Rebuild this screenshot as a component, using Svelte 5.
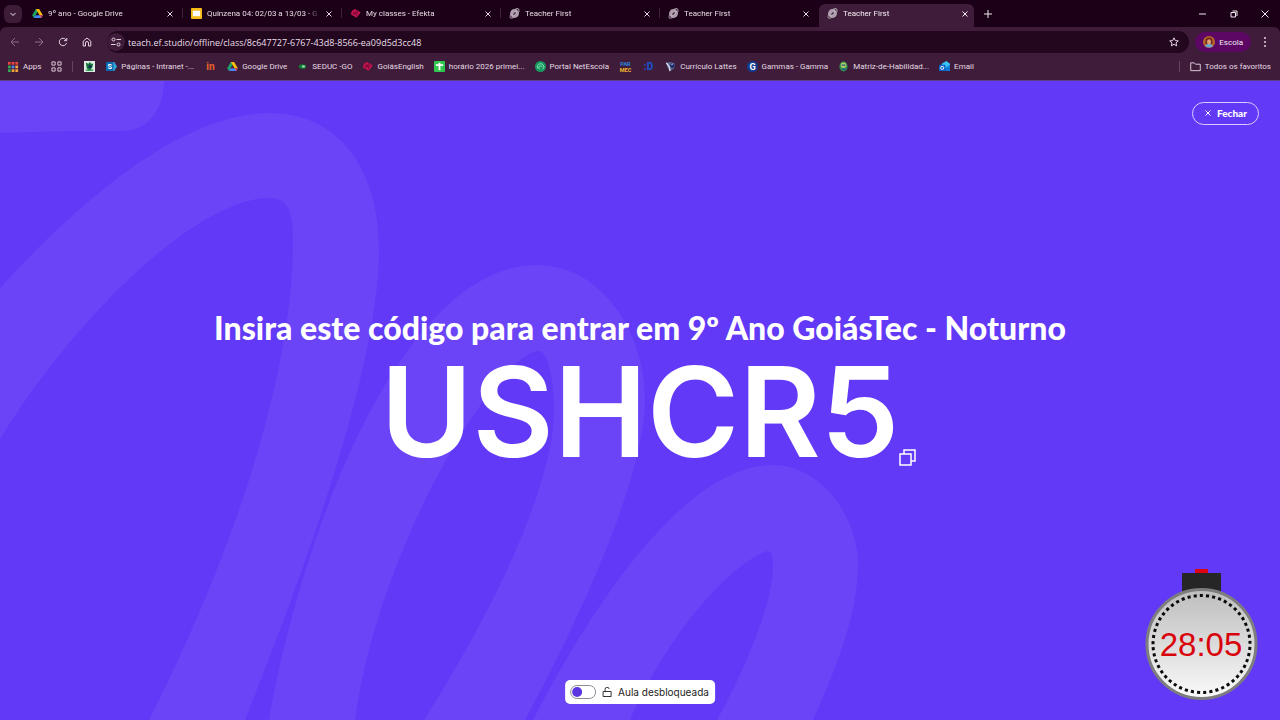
<script lang="ts">
    interface Tab      { title: string; icon: string }
    interface Bookmark { label?: string; icon: string; name?: string }

    const tabs: Tab[] = [
        { title: '9º ano - Google Drive', icon: 'drive' },
        { title: 'Quinzena 04: 02/03 a 13/03 - G', icon: 'slides' },
        { title: 'My classes - Efekta', icon: 'efekta' },
        { title: 'Teacher First', icon: 'planet' },
        { title: 'Teacher First', icon: 'planet' },
        { title: 'Teacher First', icon: 'planet' },
    ];

    const bookmarks: Bookmark[] = [
        { icon: 'crest', name: 'Escola' },
        { icon: 'sharepoint', label: 'Páginas - Intranet -...' },
        { icon: 'in', name: 'in' },
        { icon: 'drive', label: 'Google Drive' },
        { icon: 'seduc', label: 'SEDUC -GO' },
        { icon: 'efekta', label: 'GoiásEnglish' },
        { icon: 'sheet', label: 'horário 2026 primei...' },
        { icon: 'escola', label: 'Portal NetEscola' },
        { icon: 'mec', name: 'PAR MEC' },
        { icon: 'smile', name: ':D' },
        { icon: 'lattes', label: 'Currículo Lattes' },
        { icon: 'gamma', label: 'Gammas - Gamma' },
        { icon: 'matriz', label: 'Matriz-de-Habilidad...' },
        { icon: 'mail', label: 'Email' },
    ];

    let active = $state(5);
    let unlocked = $state(false);
    let url = $state('teach.ef.studio/offline/class/8c647727-6767-43d8-8566-ea09d5d3cc48');

    const code = 'USHCR5';
    const apps = ['#e8453c', '#e8453c', '#e8453c', '#35a853', '#4a86f0', '#f2a33a', '#35a853', '#f2a33a', '#f2a33a'];

    function copyCode() {
        navigator.clipboard?.writeText(code);
    }
</script>

{#snippet favicon(kind: string)}
    <svg class="favicon" viewBox="0 0 12 12" aria-hidden="true">
        {#if kind === 'drive'}
            <path d="M4.200 1h3.600L6 4.300 2 11 .2 7.800z" fill="#1ea362" />
            <path d="M4.200 1h3.600l4 6.800H8.200z" fill="#fbbc05" />
            <path d="M2 11l1.900-3.200h7.900L10 11z" fill="#4285f4" />
            <path d="M8.200 7.800h3.600L10 11z" fill="#ea4335" />
        {:else if kind === 'slides'}
            <rect width="12" height="12" rx="1" fill="#f5ba14" />
            <rect x="2" y="3" width="8" height="6" fill="#fff" />
        {:else if kind === 'efekta'}
            <path d="M5.500 1L9 3l2.500 2-2 3L7 10.500 4.500 9 1 7l1-4z" fill="#c9124f" />
            <path d="M3 3.500l5 4M7 2.500L4 8M3 6l6-1M8 3L7 9" stroke="#6d0935" stroke-width=".8" />
        {:else if kind === 'planet'}
            <circle cx="6" cy="6" r="4.800" fill="#b9a9b7" />
            <ellipse cx="6" cy="6" rx="6.500" ry="2.800" transform="rotate(-48 6 6)" fill="none" stroke="#a897a5" stroke-width="1.200" />
            <ellipse cx="6" cy="6" rx="2" ry="1" transform="rotate(-48 6 6)" fill="#4b3549" />
        {:else if kind === 'crest'}
            <rect width="12" height="12" fill="#dfeee2" />
            <path d="M2 2l3 1 1-2 2 2 2 0-1 4-3 4-3-3z" fill="#16733a" />
            <circle cx="6.500" cy="6" r="1.500" fill="#17205c" />
            <path d="M2 10h8" stroke="#1e9650" stroke-width="1.500" />
        {:else if kind === 'sharepoint'}
            <path d="M7 1h2l3 5-3 5H7z" fill="#30a5d8" />
            <rect y="1" width="8" height="10" rx="1" fill="#0868b2" />
            <text x="4" y="9" text-anchor="middle" font-size="8" font-weight="700" fill="#fff">S</text>
        {:else if kind === 'in'}
            <text x="6" y="10" text-anchor="middle" font-size="11" font-weight="700" fill="#e8632b">in</text>
        {:else if kind === 'seduc'}
            <ellipse cx="6" cy="6" rx="4" ry="2.500" fill="#137a35" />
            <ellipse cx="7" cy="6" rx="1.800" ry="1.200" fill="#a8ecc0" />
        {:else if kind === 'sheet'}
            <rect width="12" height="12" rx="1" fill="#2dc84d" />
            <path d="M2 4.500h8M6 2v8" stroke="#fff" stroke-width="2" />
        {:else if kind === 'escola'}
            <circle cx="6" cy="6" r="6" fill="#17985e" />
            <path d="M3 8a3.500 3.500 0 1 1 5.500 1M5 9a2 2 0 1 1 3-2.500" fill="none" stroke="#8de4bb" />
        {:else if kind === 'mec'}
            <text x="6" y="5.500" text-anchor="middle" font-size="6" font-weight="700" fill="#2b84d9">PAR</text>
            <text x="6" y="11.500" text-anchor="middle" font-size="6" font-weight="700" fill="#f5b731">MEC</text>
        {:else if kind === 'smile'}
            <text x="6" y="10" text-anchor="middle" font-size="11" font-weight="700" fill="#1755d8">:D</text>
        {:else if kind === 'lattes'}
            <path d="M1 2l5-1 5 2-1 5-4 3-3-3z" fill="#5a6690" />
            <path d="M1.500 2l3 4 1 5" fill="none" stroke="#dfe3ee" stroke-width="1.400" />
            <circle cx="8" cy="5" r="2.500" fill="#1e2c6c" />
            <path d="M7 4l2-1" stroke="#dfe3ee" />
        {:else if kind === 'gamma'}
            <circle cx="6" cy="6" r="6" fill="#123b8e" />
            <text x="6" y="9.500" text-anchor="middle" font-size="10" font-weight="700" fill="#fff">G</text>
        {:else if kind === 'matriz'}
            <ellipse cx="6" cy="6" rx="4.500" ry="5.500" fill="#2c8e52" />
            <circle cx="6" cy="4.500" r="3" fill="#b6cf5c" />
            <path d="M4 4.500h4M5 9h3" stroke="#23549b" stroke-width="1.500" />
        {:else if kind === 'mail'}
            <path d="M3 3l5-3 4 3v8H3z" fill="#37c4f4" />
            <path d="M12 4L5 9v2h7z" fill="#1178d4" />
            <rect y="4" width="7" height="7" rx="1" fill="#0b62c4" />
            <circle cx="3.500" cy="7.500" r="1.700" fill="none" stroke="#fff" />
        {/if}
    </svg>
{/snippet}

{#snippet cross()}
    <svg class="cross" viewBox="0 0 6 6" aria-hidden="true"><path d="M.5.5l5 5M5.500.5l-5 5" /></svg>
{/snippet}

<div class="page">
    <header class="browser">
        <div class="strip">
            <button class="search" aria-label="Pesquisar guias">
                <svg viewBox="0 0 8 8"><path d="M1.500 3L4 5.500 6.500 3" /></svg>
            </button>
            <div class="tabs">
                {#each tabs as tab, i}
                    <div class="tab" class:active={i === active}>
                        <button class="title" onclick={() => (active = i)}>
                            {@render favicon(tab.icon)}
                            <span>{tab.title}</span>
                        </button>
                        <button class="close" aria-label="Fechar guia">{@render cross()}</button>
                    </div>
                {/each}
            </div>
            <button class="plus" aria-label="Nova guia">
                <svg viewBox="0 0 8 8"><path d="M4 0v8M0 4h8" /></svg>
            </button>
            <div class="window">
                <button aria-label="Minimizar"><svg viewBox="0 0 8 8"><path d="M0 4h7" /></svg></button>
                <button aria-label="Restaurar">
                    <svg viewBox="0 0 8 8"><path d="M1 2.500h4.500V7H1zM2.500 1H7v5" /></svg>
                </button>
                <button aria-label="Fechar janela"><svg viewBox="0 0 8 8"><path d="M.5.5l7 7M7.500.5l-7 7" /></svg></button>
            </div>
        </div>

        <div class="toolbar">
            <nav class="history">
                <button disabled aria-label="Voltar"><svg viewBox="0 0 10 10"><path d="M9 5H1M5 1L1 5l4 4" /></svg></button>
                <button disabled aria-label="Avançar"><svg viewBox="0 0 10 10"><path d="M1 5h8M5 1l4 4-4 4" /></svg></button>
                <button aria-label="Recarregar">
                    <svg viewBox="0 0 10 10"><path d="M8.500 6.200A3.700 3.700 0 1 1 8 2.800M8.800 1v2.700H6" /></svg>
                </button>
                <button aria-label="Página inicial">
                    <svg viewBox="0 0 10 10"><path d="M1.200 4.200L5 1l3.800 3.200V9H6.500V6a1.500 1.500 0 0 0-3 0v3H1.200z" /></svg>
                </button>
            </nav>
            <div class="omnibox">
                <button class="site" aria-label="Informações do site">
                    <svg viewBox="0 0 10 10"><circle cx="2.500" cy="2.500" r="1.500" /><path d="M5.500 2.500H10M0 7.500h4.500" /><circle cx="7.500" cy="7.500" r="1.500" /></svg>
                </button>
                <input type="text" aria-label="Endereço" bind:value={url} />
                <button class="star" aria-label="Favoritar">
                    <svg viewBox="0 0 10 10"><path d="M5 .8l1.300 2.800 3 .3-2.300 2 .7 3L5 7.300 2.300 8.900l.7-3-2.300-2 3-.3z" /></svg>
                </button>
            </div>
            <button class="profile">
                <svg viewBox="0 0 12 12" aria-hidden="true">
                    <circle cx="6" cy="6" r="6" fill="#b8682c" />
                    <path d="M2 10q4-5 8 0a6 6 0 0 1-8 0z" fill="#65a7d8" />
                    <path d="M2.500 5a3.500 3.500 0 0 1 7 0v3h-7z" fill="#722b1c" />
                    <ellipse cx="6" cy="5.800" rx="2" ry="2.600" fill="#e5a174" />
                </svg>
                Escola
            </button>
            <button class="menu" aria-label="Menu">
                <svg viewBox="0 0 10 10"><circle cx="5" cy="1" r="1" /><circle cx="5" cy="5" r="1" /><circle cx="5" cy="9" r="1" /></svg>
            </button>
        </div>

        <nav class="bookmarks">
            <a href="#apps">
                <svg class="favicon" viewBox="0 0 12 12" aria-hidden="true">
                    {#each apps as fill, i}
                        <rect x={(i % 3) * 4} y={1 + Math.floor(i / 3) * 4} width="3" height="3" {fill} />
                    {/each}
                </svg>
                Apps
            </a>
            <a href="#grupos" aria-label="Grupos de guias">
                <svg class="favicon line" viewBox="0 0 12 12"><path d="M1 1h3.500v3.500H1zM7.500 1H11v3.500H7.500zM1 7.500h3.500V11H1zM7.500 7.500H11V11H7.500z" /></svg>
            </a>
            <span class="rule"></span>
            {#each bookmarks as item}
                <a href="#{item.icon}" class:bare={!item.label} aria-label={item.name}>
                    {@render favicon(item.icon)}{item.label ?? ''}
                </a>
            {/each}
            <span class="rule last"></span>
            <a href="#favoritos">
                <svg class="favicon line" viewBox="0 0 12 12" aria-hidden="true"><path d="M.8 2h3.700L6 3.500h5.200V10.500H.8z" /></svg>
                Todos os favoritos
            </a>
        </nav>
    </header>

    <main>
        <svg class="scribble" viewBox="0 81 1280 639" preserveAspectRatio="xMinYMin slice" aria-hidden="true">
            <path d="M0 81H164C164 110 147 131 123 131L70 131 0 133z" />
            <path d="M0 288C57 226 170 113 269 113C340 113 379 170 379 250C379 350 325 520 245 720H149C230 560 293 380 293 240C293 215 290 198 269 198C200 198 80 310 0 439z" />
            <path d="M269 720C300 540 400 265 537 265C600 265 645 330 645 400C645 470 590 600 525 720H424C500 600 554 480 554 410C554 375 547 351 539 351C500 351 380 540 355 720z" />
            <path d="M533 720C600 590 690 465 773 465C820 465 858 515 858 565C858 610 840 660 813 720H717C750 660 773 600 773 565C773 550 768 550 765 552C720 570 660 650 630 720z" />
        </svg>

        <button class="leave">{@render cross()} Fechar</button>

        <section class="invite">
            <h1>Insira este código para entrar em 9º Ano GoiásTec - Noturno</h1>
            <p class="code">
                {code}
                <button class="copy" aria-label="Copiar código" onclick={copyCode}>
                    <svg viewBox="0 0 17 17"><path d="M1 5h11v11H1zM5 5V1h11v11h-4" /></svg>
                </button>
            </p>
        </section>

        <label class="lock">
            <input type="checkbox" bind:checked={unlocked} />
            <svg viewBox="0 0 10 10" aria-hidden="true"><path d="M1 4.500h8v5H1zM3 4.500V2.500a2 2 0 0 1 4-.5" /></svg>
            <span>Aula desbloqueada</span>
        </label>

        <!-- Countdown stopwatch -->
        <svg class="timer" viewBox="0 0 114 132" role="img" aria-label="28:05">
            <defs>
                <linearGradient id="face" x1="0" y1="0" x2="0" y2="1">
                    <stop offset="0" stop-color="#bdbdbd" />
                    <stop offset="1" stop-color="#fafafa" />
                </linearGradient>
            </defs>
            <rect x="51" y="1" width="13" height="5" fill="#dc0613" />
            <rect x="38" y="5" width="39" height="20" fill="#262626" />
            <circle cx="57.500" cy="76" r="54.500" fill="url(#face)" stroke="#7d7d7d" stroke-width="3" />
            <circle cx="57.500" cy="76" r="48.500" fill="none" stroke="#0b0b0b" stroke-width="3" pathLength="98" stroke-dasharray="1 1" transform="rotate(-92 57.500 76)" />
            <text x="57" y="88" text-anchor="middle" font-size="33" fill="#d9040b">28:05</text>
        </svg>
    </main>
</div>

<style>
    :global(body) { margin: 0; }

    .page {
        min-height: 100vh;
        display: flex;
        flex-direction: column;
        font-family: Roboto, "Open Sans", sans-serif;
        font-size: 8px;
        color: #e6d9e3;
    }
    button {
        display: flex;
        align-items: center;
        justify-content: center;
        padding: 0;
        border: 0;
        background: none;
        color: inherit;
        font: inherit;
        cursor: pointer;
    }
    svg { display: block; flex: none; fill: none; stroke: none; }
    .favicon { width: 11px; height: 11px; overflow: visible; }
    .cross   { width: 6px; height: 6px; stroke: currentColor; }

    /* Browser chrome */
    .browser { background: #1b0017; }
    .strip   { display: flex; align-items: center; height: 27px; }
    .search  { width: 18px; height: 18px; margin: 0 2px 0 4px; border-radius: 6px; background: #3d1c38; }
    .search svg,
    .plus svg,
    .window svg { width: 8px; height: 8px; stroke: #f1e8ef; }

    .tabs  { display: flex; align-self: stretch; gap: 4px; padding-top: 4px; min-width: 0; }
    .tab   {
        position: relative;
        display: flex;
        align-items: center;
        flex: 0 1 155px;
        width: 155px;
        min-width: 0;
        padding: 0 6px 4px 8px;
        box-sizing: border-box;
        border-radius: 6px 6px 0 0;
    }
    .tab.active { background: #3f1d3a; color: #f5edf3; }
    .tab:not(.active, :nth-last-child(2))::after {
        content: '';
        position: absolute;
        right: -4px;
        top: 4px;
        width: 1px;
        height: 10px;
        background: #3f2139;
    }
    .title { flex: 1; justify-content: flex-start; gap: 5px; min-width: 0; }
    .title span {
        flex: 1;
        overflow: hidden;
        white-space: nowrap;
        text-align: left;
        margin-right: 6px;
        mask-image: linear-gradient(to right, #000 88%, transparent);
    }
    .plus   { width: 20px; height: 20px; margin-left: 4px; }
    .window { display: flex; margin-left: auto; }
    .window button { width: 31px; height: 27px; }

    .toolbar {
        display: flex;
        align-items: center;
        height: 28px;
        padding: 2px 5px 0 3px;
        box-sizing: border-box;
        background: #3f1d3a;
        border-radius: 6px 6px 0 0;
    }
    .toolbar svg { width: 10px; height: 10px; stroke: #e6d5e3; }
    .history { display: flex; margin-right: 8px; }
    .history button { width: 24px; height: 24px; }
    .history button:disabled { opacity: 0.45; }
    .omnibox {
        display: flex;
        align-items: center;
        flex: 1;
        height: 22px;
        margin-right: 6px;
        padding: 0 10px 0 0;
        border-radius: 11px;
        background: #22071e;
    }
    .site  { width: 18px; height: 18px; border-radius: 9px; background: #3f1d3a; }
    .omnibox input {
        flex: 1;
        min-width: 0;
        padding: 0 3px;
        border: 0;
        outline: 0;
        background: none;
        color: #e9dfe7;
        font-family: "Open Sans", sans-serif;
        font-size: 9px;
    }
    .profile {
        gap: 4px;
        height: 20px;
        padding: 0 8px;
        border-radius: 10px;
        background: #5b0763;
        color: #f6ecf5;
    }
    .profile svg { width: 12px; height: 12px; stroke: none; }
    .menu { width: 20px; height: 20px; margin-left: 4px; }
    .menu svg { fill: #e6d5e3; stroke: none; }

    .bookmarks {
        display: flex;
        align-items: center;
        gap: 10px;
        height: 23px;
        padding: 0 9px 2px 8px;
        background: #3f1d3a;
        border-bottom: 1px solid #5c4083;
        white-space: nowrap;
        overflow: hidden;
    }
    .bookmarks a { display: flex; align-items: center; gap: 4px; color: inherit; text-decoration: none; }
    .bookmarks .bare { padding: 0 1px; }
    .favicon.line { stroke: #e6d5e3; }
    .rule { width: 1px; height: 11px; background: #65435f; }
    .rule.last { margin-left: auto; }

    /* Lesson code screen */
    main {
        position: relative;
        flex: 1;
        display: grid;
        place-items: center;
        background: #6139f6;
        color: #fff;
        font-family: Inter, "Open Sans", sans-serif;
        overflow: hidden;
    }
    .scribble { position: absolute; inset: 0; width: 100%; height: 100%; fill: #6b44f8; }
    .leave {
        position: absolute;
        top: 21px;
        right: 21px;
        gap: 6px;
        height: 23px;
        padding: 0 11px 2px 12px;
        border: 1px solid #d9cffd;
        border-radius: 12px;
        font-family: Lato, sans-serif;
        font-size: 10px;
        font-weight: 900;
    }
    .invite { position: relative; text-align: center; padding: 0 24px 18px; }
    h1 { margin: 0; font-family: Lato, sans-serif; font-size: 32px; font-weight: 900; line-height: 40px; }
    .code {
        position: relative;
        width: fit-content;
        margin: 0 auto;
        font-size: 125px;
        font-weight: 600;
        line-height: 128px;
    }
    .copy { position: absolute; left: 100%; bottom: 10px; }
    .copy svg { width: 17px; height: 17px; stroke: #fff; stroke-width: 1.5; }

    .lock {
        position: absolute;
        bottom: 16px;
        left: 50%;
        transform: translateX(-50%);
        display: flex;
        align-items: center;
        gap: 6px;
        height: 24px;
        padding: 0 6px 0 5px;
        border-radius: 5px;
        background: #fff;
        color: #222;
        font-size: 10px;
        white-space: nowrap;
        cursor: pointer;
    }
    .lock svg { width: 10px; height: 10px; stroke: #333; }
    .lock input {
        appearance: none;
        display: flex;
        width: 26px;
        height: 14px;
        margin: 0;
        padding: 1px;
        box-sizing: border-box;
        border: 1px solid #8b8b96;
        border-radius: 7px;
    }
    .lock input::before { content: ''; width: 10px; height: 10px; border-radius: 50%; background: #5a35e0; }
    .lock input:checked { justify-content: flex-end; }

    .timer {
        position: absolute;
        right: 22px;
        bottom: 20px;
        width: 114px;
        height: 132px;
        font-family: "Liberation Sans", Arial, sans-serif;
    }
</style>
